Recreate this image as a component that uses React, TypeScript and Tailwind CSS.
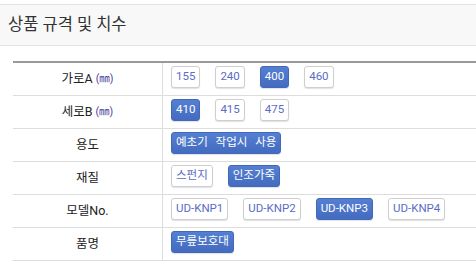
import { Fragment } from "react";

type Option = { label: string; active?: boolean };
type SpecRow = { name: string; unit?: string; options: Option[] };

const rows: SpecRow[] = [
  {
    name: "가로A",
    unit: "(㎜)",
    options: [{ label: "155" }, { label: "240" }, { label: "400", active: true }, { label: "460" }],
  },
  {
    name: "세로B",
    unit: "(㎜)",
    options: [{ label: "410", active: true }, { label: "415" }, { label: "475" }],
  },
  { name: "용도", options: [{ label: "예초기 작업시 사용", active: true }] },
  { name: "재질", options: [{ label: "스펀지" }, { label: "인조가죽", active: true }] },
  {
    name: "모델No.",
    options: [
      { label: "UD-KNP1" },
      { label: "UD-KNP2" },
      { label: "UD-KNP3", active: true },
      { label: "UD-KNP4" },
    ],
  },
  { name: "품명", options: [{ label: "무릎보호대", active: true }] },
];

const OptionButton = ({ label, active }: Option) => (
  <span
    className={`flex h-[22px] items-center rounded-[3px] px-[4px] text-[11.5px] leading-none whitespace-nowrap [word-spacing:5px] shadow-[0_1px_1px_rgba(0,0,0,0.12)] ${
      active
        ? "border border-[#4068bb] bg-gradient-to-b from-[#5580d2] to-[#436bbf] text-white"
        : "border border-[#cfcfcf] bg-white text-[#5a6cc4]"
    }`}
  >
    {label}
  </span>
);

const App = () => {
  return (
    <div
      className="h-[264px] w-[476px] overflow-hidden bg-white text-[#333]"
      style={{ fontFamily: 'Roboto, "Noto Sans CJK KR", sans-serif' }}
    >
      <div className="mt-[4px] flex h-[42px] items-center border-y border-[#e3e3e3] bg-[#f8f8f8] pl-[8px]">
        <h2 className="text-[16.5px] font-normal text-[#333]">상품 규격 및 치수</h2>
      </div>

      <div className="ml-[13px] mt-[15px] grid grid-cols-[150px_1fr] border-t-2 border-[#999]">
        {rows.map((row) => (
          <Fragment key={row.name}>
            <div className="flex h-[33px] items-center justify-center border-b border-r border-[#ddd] text-[12.5px] text-[#222]">
              {row.name}
              {row.unit && <span className="ml-[3px] text-[10.5px] text-[#4b3f9e]">{row.unit}</span>}
            </div>
            <div className="flex h-[33px] items-start gap-[15px] border-b border-[#ddd] pl-[8px] pt-[3px]">
              {row.options.map((opt) => (
                <OptionButton key={opt.label} {...opt} />
              ))}
            </div>
          </Fragment>
        ))}
      </div>
    </div>
  );
};

export default App;
